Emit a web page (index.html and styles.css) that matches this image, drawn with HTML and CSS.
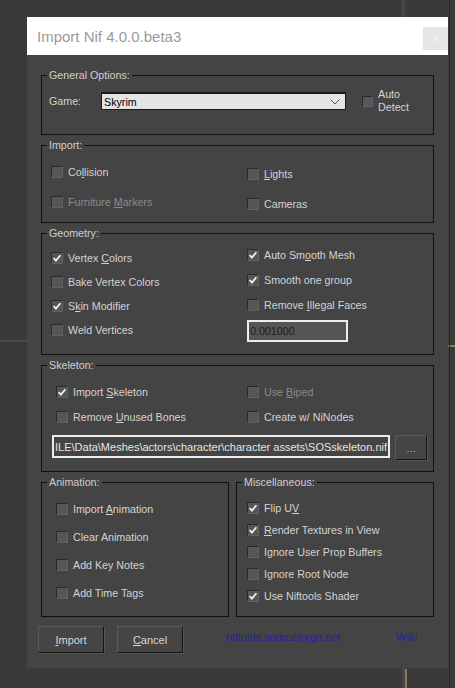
FILE: index.html
```html
<!DOCTYPE html>
<html>
<head>
<meta charset="utf-8">
<title>Import Nif</title>
<link rel="stylesheet" href="styles.css">
</head>
<body>
<div class="dialog">
  <div class="titlebar">
    <span class="title">Import Nif 4.0.0.beta3</span>
    <span class="close">×</span>
  </div>
  <div class="content">
    <fieldset class="grp">
      <legend>General Options:</legend>
      <div class="general-row">
        <span class="game-label">Game:</span>
        <div class="select">
          <span class="select-text">Skyrim</span>
          <svg class="chev" width="10" height="6" viewBox="0 0 10 6"><polyline points="0.5,0.5 5,5 9.5,0.5" fill="none" stroke="#555" stroke-width="1"/></svg>
        </div>
        <div class="cb auto"><span class="box small"></span><span class="twoline">Auto<br>Detect</span></div>
      </div>
    </fieldset>

    <fieldset class="grp">
      <legend>Import:</legend>
      <div class="cols import-cols">
        <div class="col left">
          <div class="cb"><span class="box"></span><span>Co<u>l</u>lision</span></div>
          <div class="cb"><span class="box"></span><span class="dim">Furniture <u>M</u>arkers</span></div>
        </div>
        <div class="col right">
          <div class="cb"><span class="box"></span><span><u>L</u>ights</span></div>
          <div class="cb"><span class="box"></span><span>Cameras</span></div>
        </div>
      </div>
    </fieldset>

    <fieldset class="grp">
      <legend>Geometry:</legend>
      <div class="cols geo-cols">
        <div class="col left">
          <div class="cb"><span class="box"><svg viewBox="0 0 10 10"><path d="M1.6 5 L3.9 7.6 L8.4 2.2"/></svg></span><span>Vertex <u>C</u>olors</span></div>
          <div class="cb"><span class="box"></span><span>Bake Vertex Colors</span></div>
          <div class="cb"><span class="box"><svg viewBox="0 0 10 10"><path d="M1.6 5 L3.9 7.6 L8.4 2.2"/></svg></span><span>S<u>k</u>in Modifier</span></div>
          <div class="cb"><span class="box"></span><span>Weld Vertices</span></div>
        </div>
        <div class="col right">
          <div class="cb"><span class="box"><svg viewBox="0 0 10 10"><path d="M1.6 5 L3.9 7.6 L8.4 2.2"/></svg></span><span>Auto Sm<u>o</u>oth Mesh</span></div>
          <div class="cb"><span class="box"><svg viewBox="0 0 10 10"><path d="M1.6 5 L3.9 7.6 L8.4 2.2"/></svg></span><span>Smooth one group</span></div>
          <div class="cb"><span class="box"></span><span>Remove <u>I</u>llegal Faces</span></div>
          <div class="numbox">0.001000</div>
        </div>
      </div>
    </fieldset>

    <fieldset class="grp">
      <legend>Skeleton:</legend>
      <div class="skel">
        <div class="cols skel-cols">
          <div class="col left">
            <div class="cb"><span class="box"><svg viewBox="0 0 10 10"><path d="M1.6 5 L3.9 7.6 L8.4 2.2"/></svg></span><span>Import <u>S</u>keleton</span></div>
            <div class="cb"><span class="box"></span><span>Remove <u>U</u>nused Bones</span></div>
          </div>
          <div class="col right">
            <div class="cb"><span class="box"></span><span class="dim">Use <u>B</u>iped</span></div>
            <div class="cb"><span class="box"></span><span>Create w/ NiNodes</span></div>
          </div>
        </div>
        <div class="path-row">
          <div class="pathbox"><span>ILE\Data\Meshes\actors\character\character assets\SOSskeleton.nif</span></div>
          <div class="btn browse">...</div>
        </div>
      </div>
    </fieldset>

    <div class="bottom-groups">
      <fieldset class="grp anim">
        <legend>Animation:</legend>
        <div class="col anim-col">
          <div class="cb"><span class="box"></span><span>Import <u>A</u>nimation</span></div>
          <div class="cb"><span class="box"></span><span>Clear Animation</span></div>
          <div class="cb"><span class="box"></span><span>Add Key Notes</span></div>
          <div class="cb"><span class="box"></span><span>Add Time Tags</span></div>
        </div>
      </fieldset>
      <fieldset class="grp misc">
        <legend>Miscellaneous:</legend>
        <div class="col misc-col">
          <div class="cb"><span class="box"><svg viewBox="0 0 10 10"><path d="M1.6 5 L3.9 7.6 L8.4 2.2"/></svg></span><span>Flip U<u>V</u></span></div>
          <div class="cb"><span class="box"><svg viewBox="0 0 10 10"><path d="M1.6 5 L3.9 7.6 L8.4 2.2"/></svg></span><span><u>R</u>ender Textures in View</span></div>
          <div class="cb"><span class="box"></span><span>Ignore User Prop Buffers</span></div>
          <div class="cb"><span class="box"></span><span>Ignore Root Node</span></div>
          <div class="cb"><span class="box"><svg viewBox="0 0 10 10"><path d="M1.6 5 L3.9 7.6 L8.4 2.2"/></svg></span><span>Use Niftools Shader</span></div>
        </div>
      </fieldset>
    </div>

    <div class="footer">
      <div class="btn action"><span><u>I</u>mport</span></div>
      <div class="btn action"><span><u>C</u>ancel</span></div>
      <span class="link site">niftools.sourceforge.net</span>
      <span class="link wiki">Wiki</span>
    </div>
  </div>
</div>
</body>
</html>
```

FILE: styles.css
```css
html, body {
  height: 100%;
}

body {
  margin: 0;
  box-sizing: border-box;
  padding: 17px 0 0 27px;
  font-family: "Liberation Sans", Arial, sans-serif;
  font-size: 10.7px;
  color: #d3d3d3;
  background-color: #3a3a3a;
  background-image:
    linear-gradient(#474747, #474747),
    linear-gradient(#484848, #484848),
    linear-gradient(#2a2a2a, #2a2a2a),
    linear-gradient(#8a7c52, #8a7c52),
    linear-gradient(#8a7c52, #8a7c52);
  background-size: 3px 100%, 27px 2px, 1px 100%, 2px 30px, 7px 2px;
  background-position: 402px 0, 0 340px, 449px 0, 405px 669px, 448px 345px;
  background-repeat: no-repeat;
}

.dialog {
  width: 421px;
  background: #444444;
}

.titlebar {
  height: 38px;
  background: #ffffff;
  display: flex;
  align-items: center;
  padding-left: 10px;
}

.title {
  font-size: 15px;
  line-height: 20px;
  margin-top: 2px;
  color: #9a9a9a;
}

.close {
  margin-left: auto;
  margin-top: 5px;
  width: 25px;
  height: 23px;
  background: #e6e6e6;
  color: #f4f4f4;
  font-size: 13px;
  line-height: 23px;
  text-align: center;
}

.content {
  padding: 14px 14px 15px 14px;
}

.grp {
  margin: 0 0 4px 0;
  padding: 0;
  border: 1px solid #101010;
  min-width: 0;
}

.grp legend {
  margin-left: 5px;
  padding: 0 2px;
  line-height: 12px;
  color: #cfcfcf;
}

/* general options */
.general-row {
  display: flex;
  align-items: center;
  height: 26px;
  padding: 7px 0 20px 7px;
}

.game-label {
  width: 52px;
}

.select {
  width: 245px;
  height: 18px;
  box-sizing: border-box;
  background: #e4e4e4;
  border: 1px solid #1a1a1a;
  border-top-width: 2px;
  display: flex;
  align-items: center;
  padding: 0 5px 0 2px;
  color: #000;
}

.select-text {
  flex: 1;
}

.chev {
  display: block;
}

.cb.auto {
  margin-left: 16px;
  gap: 5px;
  height: 26px;
}

.box.small {
  width: 11px;
  height: 11px;
}

.twoline {
  line-height: 13px;
}

/* checkboxes */
.cb {
  display: flex;
  align-items: center;
  gap: 5px;
  height: 20px;
  white-space: nowrap;
}

.box {
  flex: none;
  width: 12px;
  height: 12px;
  box-sizing: border-box;
  background: #565656;
  border: 1px solid;
  border-color: #2a2a2a #626262 #626262 #2a2a2a;
  display: flex;
  align-items: center;
  justify-content: center;
}

.box svg {
  width: 10px;
  height: 10px;
}

.box svg path {
  fill: none;
  stroke: #f4f4f4;
  stroke-width: 1.7;
}

.dim {
  color: #8a8a8a;
}

u {
  text-decoration-thickness: 1px;
  text-underline-offset: 1px;
}

.cols {
  display: flex;
}

.col {
  display: flex;
  flex-direction: column;
}

/* import */
.import-cols {
  padding: 11px 0 8px 9px;
}

.import-cols .left {
  width: 196px;
  gap: 10px;
}

.import-cols .right {
  gap: 10px;
  padding-top: 2px;
}

/* geometry */
.geo-cols {
  padding: 6px 0 12px 9px;
}

.geo-cols .left {
  width: 196px;
  gap: 4px;
  padding-top: 3px;
}

.geo-cols .right {
  gap: 5px;
}

.numbox {
  width: 101px;
  height: 22px;
  box-sizing: border-box;
  border: 2px solid #ededed;
  background: #555555;
  color: #1c1c1c;
  line-height: 18px;
  padding-left: 1px;
}

/* skeleton */
.skel {
  padding: 11px 6px 11px 10px;
}

.skel-cols {
  padding-left: 4px;
}

.skel-cols .left {
  width: 191px;
  gap: 5px;
}

.skel-cols .right {
  gap: 5px;
}

.path-row {
  display: flex;
  align-items: flex-start;
  gap: 5px;
  margin-top: 8px;
}

.pathbox {
  width: 338px;
  height: 23px;
  box-sizing: border-box;
  border: 2px solid #ededed;
  background: #444444;
  color: #e4e4e4;
  display: flex;
  justify-content: flex-end;
  align-items: center;
  overflow: hidden;
  white-space: nowrap;
  padding-right: 1px;
  font-size: 11px;
}

.pathbox span {
  flex: none;
}

.btn {
  box-sizing: border-box;
  background: #454545;
  border: 1px solid;
  border-color: #5a5a5a #141414 #141414 #5a5a5a;
  box-shadow: 1px 1px 0 #555;
  color: #d6d6d6;
  display: flex;
  align-items: center;
  justify-content: center;
}

.browse {
  width: 32px;
  height: 25px;
  color: #b0b0b0;
}

/* animation / misc */
.bottom-groups {
  display: flex;
  gap: 7px;
  margin-top: 2px;
}

.bottom-groups .grp {
  margin-bottom: 0;
}

.anim {
  width: 188px;
  box-sizing: border-box;
}

.misc {
  width: 198px;
  box-sizing: border-box;
}

.anim-col {
  padding: 11px 0 0 14px;
  gap: 8px;
}

.misc-col {
  padding: 10px 0 10px 10px;
  gap: 2px;
}

/* footer */
.footer {
  display: flex;
  align-items: flex-start;
  margin-top: 9px;
  margin-left: -3px;
}

.action {
  width: 66px;
  height: 27px;
  font-size: 11px;
}

.action + .action {
  margin-left: 13px;
}

.link {
  font-size: 11px;
  line-height: 20px;
  margin-top: 1px;
  color: #2222aa;
}

.site {
  margin-left: 43px;
}

.wiki {
  margin-left: 56px;
}
```
